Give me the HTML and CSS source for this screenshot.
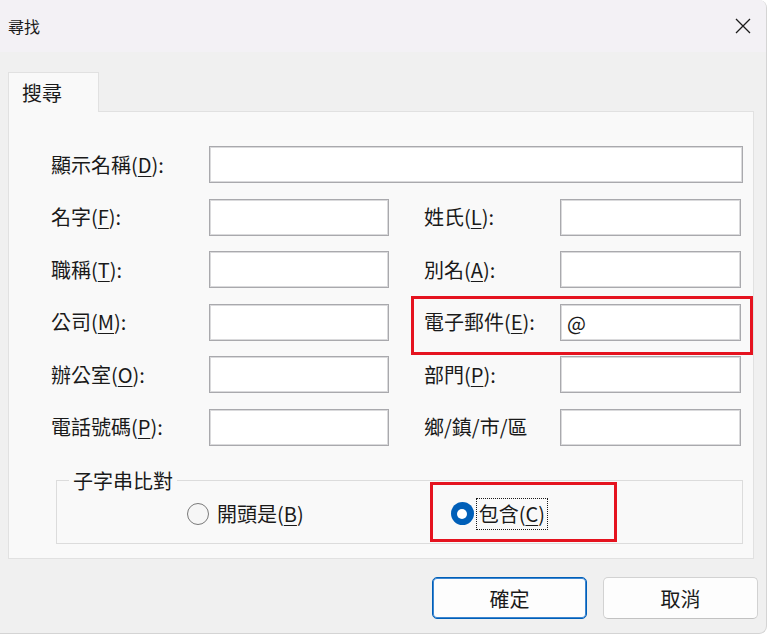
FILE: index.html
```html
<!DOCTYPE html>
<html lang="zh-Hant">
<head>
<meta charset="utf-8">
<title>尋找</title>
<link rel="stylesheet" href="styles.css">
</head>
<body>
<div class="window">
  <header class="titlebar">
    <span class="title">尋找</span>
    <svg class="close" width="16" height="16" viewBox="0 0 16 16" aria-label="關閉">
      <path d="M1 1 L15 15 M15 1 L1 15" stroke="#1b1b1b" stroke-width="1.3" fill="none"/>
    </svg>
  </header>

  <main class="client">
    <div class="tabs">
      <div class="tab active">搜尋</div>
    </div>

    <section class="panel">
      <div class="form">
        <label class="lbl">顯示名稱(<u>D</u>):</label>
        <input class="field wide" type="text">

        <label class="lbl">名字(<u>F</u>):</label>
        <input class="field" type="text">
        <label class="lbl right">姓氏(<u>L</u>):</label>
        <input class="field" type="text">

        <label class="lbl">職稱(<u>T</u>):</label>
        <input class="field" type="text">
        <label class="lbl right">別名(<u>A</u>):</label>
        <input class="field" type="text">

        <label class="lbl">公司(<u>M</u>):</label>
        <input class="field" type="text">
        <label class="lbl right">電子郵件(<u>E</u>):</label>
        <input class="field" type="text" value="@">

        <label class="lbl">辦公室(<u>O</u>):</label>
        <input class="field" type="text">
        <label class="lbl right">部門(<u>P</u>):</label>
        <input class="field" type="text">

        <label class="lbl">電話號碼(<u>P</u>):</label>
        <input class="field" type="text">
        <label class="lbl right">鄉/鎮/市/區</label>
        <input class="field" type="text">
      </div>

      <fieldset class="group">
        <legend>子字串比對</legend>
        <div class="radios">
          <label class="radio first"><span class="dot"></span><span class="rtext">開頭是(<u>B</u>)</span></label>
          <label class="radio second checked"><span class="dot"></span><span class="rtext focus">包含(<u>C</u>)</span></label>
        </div>
      </fieldset>

      <div class="mark mark-email"></div>
      <div class="mark mark-contains"></div>
    </section>

    <div class="actions">
      <button class="btn default" type="button">確定</button>
      <button class="btn" type="button">取消</button>
    </div>
  </main>
</div>
</body>
</html>
```

FILE: styles.css
```css
* { box-sizing: border-box; }

html, body {
  margin: 0;
  padding: 0;
  background: #ffffff;
}

body {
  width: 770px;
  height: 638px;
  overflow: hidden;
  font-family: "Noto Sans CJK TC", "Noto Sans", sans-serif;
  color: #1a1a1a;
}

.window {
  width: 767px;
  height: 634px;
  background: #f0f0f0;
  border-right: 1px solid #d4d4d4;
  border-bottom: 1px solid #d4d4d4;
  border-radius: 0 8px 8px 0;
  overflow: hidden;
  display: flex;
  flex-direction: column;
}

/* ---- title bar ---- */
.titlebar {
  height: 52px;
  flex: none;
  background: #f3f1f5;
  display: flex;
  align-items: center;
  justify-content: space-between;
  padding: 0 15px 0 8px;
}

.title {
  font-size: 16px;
  line-height: 20px;
  color: #1a1a1a;
}

.close { display: block; }

/* ---- client area ---- */
.client {
  flex: 1;
  display: flex;
  flex-direction: column;
}

.tabs {
  display: flex;
  margin-top: 20px;
  padding-left: 8px;
}

.tab {
  width: 91px;
  height: 40px;
  padding-left: 13px;
  display: flex;
  align-items: center;
  font-size: 20px;
  line-height: 20px;
  background: #f9f9f9;
  border: 1px solid #e1e1e1;
  border-bottom: none;
  margin-bottom: -1px;
  position: relative;
  z-index: 1;
}

.panel {
  position: relative;
  margin-left: 8px;
  width: 746px;
  height: 448px;
  background: #f9f9f9;
  border: 1px solid #e1e1e1;
  padding: 34px 0 0 42px;
}

/* ---- form grid ---- */
.form {
  display: grid;
  grid-template-columns: 158px 180px 171px 181px;
  grid-auto-rows: 37px;
  row-gap: 15.6px;
}

.lbl {
  font-size: 20px;
  line-height: 24px;
  align-self: center;
  white-space: nowrap;
  color: #1a1a1a;
}

.lbl.right { margin-left: 35px; }

.lbl u, .radio u {
  text-decoration-thickness: 1px;
  text-underline-offset: 3px;
}

.field {
  width: 100%;
  height: 37px;
  margin: 0;
  background: #ffffff;
  border: 1px solid #a9a9ad;
  box-shadow: inset 0 0 0 1px #dadadc;
  border-radius: 0;
  padding: 0 0 0 6px;
  font-family: "Noto Sans CJK TC", "Noto Sans", sans-serif;
  font-size: 20px;
  color: #1a1a1a;
  outline: none;
}

.field.wide {
  grid-column: 2 / 5;
  width: calc(100% + 2px);
}

/* ---- group box ---- */
.group {
  margin: 25px 0 0 5px;
  width: 687px;
  height: 73px;
  padding: 0;
  border: 1px solid #dcdcdc;
  position: relative;
}

.group legend {
  margin-left: 12px;
  padding: 0 4px;
  font-size: 20px;
  line-height: 20px;
  color: #1a1a1a;
}

.radios {
  display: flex;
  align-items: center;
  height: 52px;
  padding-bottom: 6px;
}

.radio {
  display: flex;
  align-items: center;
  font-size: 20px;
  line-height: 24px;
}

.radio.first { margin-left: 130px; }
.radio.second { margin-left: 147px; }

.dot {
  width: 22px;
  height: 22px;
  border-radius: 50%;
  border: 1.5px solid #7a7a7a;
  background: #f6f6f6;
  margin-right: 8px;
  flex: none;
  position: relative;
}

.radio.checked .dot {
  width: 23px;
  height: 23px;
  border: none;
  background: #005fb8;
  margin-right: 4px;
}

.radio.checked .dot::after {
  content: "";
  position: absolute;
  left: 50%;
  top: 50%;
  width: 10px;
  height: 10px;
  margin: -5px 0 0 -5px;
  border-radius: 50%;
  background: #ffffff;
}

.rtext.focus {
  outline: 1px dotted #1a1a1a;
  outline-offset: 1px;
  padding: 2px 1px;
}

/* ---- highlight frames ---- */
.mark {
  position: absolute;
  border: 3px solid #e5131f;
  pointer-events: none;
}

.mark-email {
  left: 402px;
  top: 184px;
  width: 342px;
  height: 59px;
}

.mark-contains {
  left: 421px;
  top: 370px;
  width: 187px;
  height: 60px;
}

/* ---- dialog buttons ---- */
.actions {
  display: flex;
  justify-content: flex-end;
  gap: 16px;
  padding-right: 8px;
  margin-top: 18px;
}

.btn {
  width: 155px;
  height: 42px;
  border-radius: 5px;
  background: #fdfdfd;
  border: 1px solid #d2d2d2;
  border-bottom-color: #c2c2c2;
  font-family: "Noto Sans CJK TC", "Noto Sans", sans-serif;
  font-size: 20px;
  color: #1a1a1a;
  padding: 0;
}

.btn.default {
  border: 1px solid #005fb8;
  box-shadow: inset 0 0 0 1px #3d86d0;
}
```
